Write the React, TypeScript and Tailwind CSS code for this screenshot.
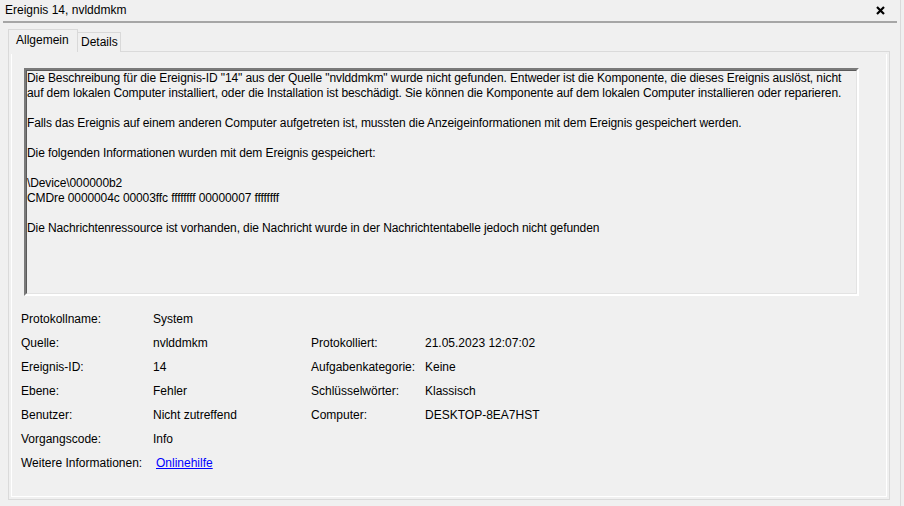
import React from "react";

const FONT = "font-['Liberation_Sans',Arial,sans-serif]";

const descLines = [
  'Die Beschreibung für die Ereignis-ID "14" aus der Quelle "nvlddmkm" wurde nicht gefunden. Entweder ist die Komponente, die dieses Ereignis auslöst, nicht',
  "auf dem lokalen Computer installiert, oder die Installation ist beschädigt. Sie können die Komponente auf dem lokalen Computer installieren oder reparieren.",
  "",
  "Falls das Ereignis auf einem anderen Computer aufgetreten ist, mussten die Anzeigeinformationen mit dem Ereignis gespeichert werden.",
  "",
  "Die folgenden Informationen wurden mit dem Ereignis gespeichert:",
  "",
  "\\Device\\000000b2",
  "CMDre 0000004c 00003ffc ffffffff 00000007 ffffffff",
  "",
  "Die Nachrichtenressource ist vorhanden, die Nachricht wurde in der Nachrichtentabelle jedoch nicht gefunden",
];

const rows: [string, string, string?, string?][] = [
  ["Protokollname:", "System"],
  ["Quelle:", "nvlddmkm", "Protokolliert:", "21.05.2023 12:07:02"],
  ["Ereignis-ID:", "14", "Aufgabenkategorie:", "Keine"],
  ["Ebene:", "Fehler", "Schlüsselwörter:", "Klassisch"],
  ["Benutzer:", "Nicht zutreffend", "Computer:", "DESKTOP-8EA7HST"],
  ["Vorgangscode:", "Info"],
];

export default function App() {
  return (
    <div className={`h-[506px] w-[904px] overflow-hidden bg-[#f0f0f0] text-[12px] text-black ${FONT}`}>
      <div className="h-[506px] w-[901px] border-r border-[#dadada]">
        {/* title bar */}
        <div className="flex h-[21px] items-center justify-between pl-[5px] pr-[15px]">
          <span className="leading-[15px]">Ereignis 14, nvlddmkm</span>
          <svg width="9" height="9" viewBox="0 0 9 9">
            <path d="M1 1 L8 8 M8 1 L1 8" stroke="#000" strokeWidth="2.2" />
          </svg>
        </div>
        <div className="ml-[3px] h-[2px] w-[894px] bg-[#a6a6a6]" />

        {/* tabs */}
        <div className="ml-[8px] mt-[6px] flex h-[23px] items-end">
          <div className="relative z-10 flex h-[23px] w-[70px] items-start border border-b-0 border-[#d9d9d9] bg-[#f0f0f0] pl-[7px] pt-[3px] leading-[15px]">
            Allgemein
          </div>
          <div className="flex h-[20px] w-[43px] items-start border border-b-0 border-l-0 border-[#d9d9d9] bg-[#f0f0f0] pl-[3px] pt-[2px] leading-[15px]">
            Details
          </div>
        </div>

        {/* panel */}
        <div className="-mt-[1px] ml-[8px] h-[449px] w-[882px] border border-[#dadada] p-[2px]">
          <div className="h-full w-full border-b border-l border-r border-white pl-[12px] pt-[14px]">
            {/* description */}
            <div className="h-[228px] w-[835px] border-2 border-b-[#ffffff] border-l-[#7a7a7a] border-r-[#ffffff] border-t-[#7a7a7a]">
              <div className="h-full w-full border border-b-[#e3e3e3] border-l-[#5a5a5a] border-r-[#e3e3e3] border-t-[#5a5a5a] tracking-[-0.1px]">
                {descLines.map((l, i) => (
                  <div key={i} className="h-[15px] whitespace-nowrap leading-[15px]">
                    {l}
                  </div>
                ))}
              </div>
            </div>

            {/* fields */}
            <div className="mt-[11px] -ml-[3px]">
              {rows.map(([a, b, c, d], i) => (
                <div key={i} className="flex h-[24px] items-center leading-[15px]">
                  <span className="w-[132px] whitespace-nowrap">{a}</span>
                  <span className="w-[158px] whitespace-nowrap">{b}</span>
                  {c && <span className="w-[114px] whitespace-nowrap">{c}</span>}
                  {d && <span className="whitespace-nowrap">{d}</span>}
                </div>
              ))}
              <div className="flex h-[24px] items-center leading-[15px]">
                <span className="w-[135px] whitespace-nowrap">Weitere Informationen:</span>
                <a href="#" className="text-[#0000ff] underline">
                  Onlinehilfe
                </a>
              </div>
            </div>
          </div>
        </div>
      </div>
    </div>
  );
}
